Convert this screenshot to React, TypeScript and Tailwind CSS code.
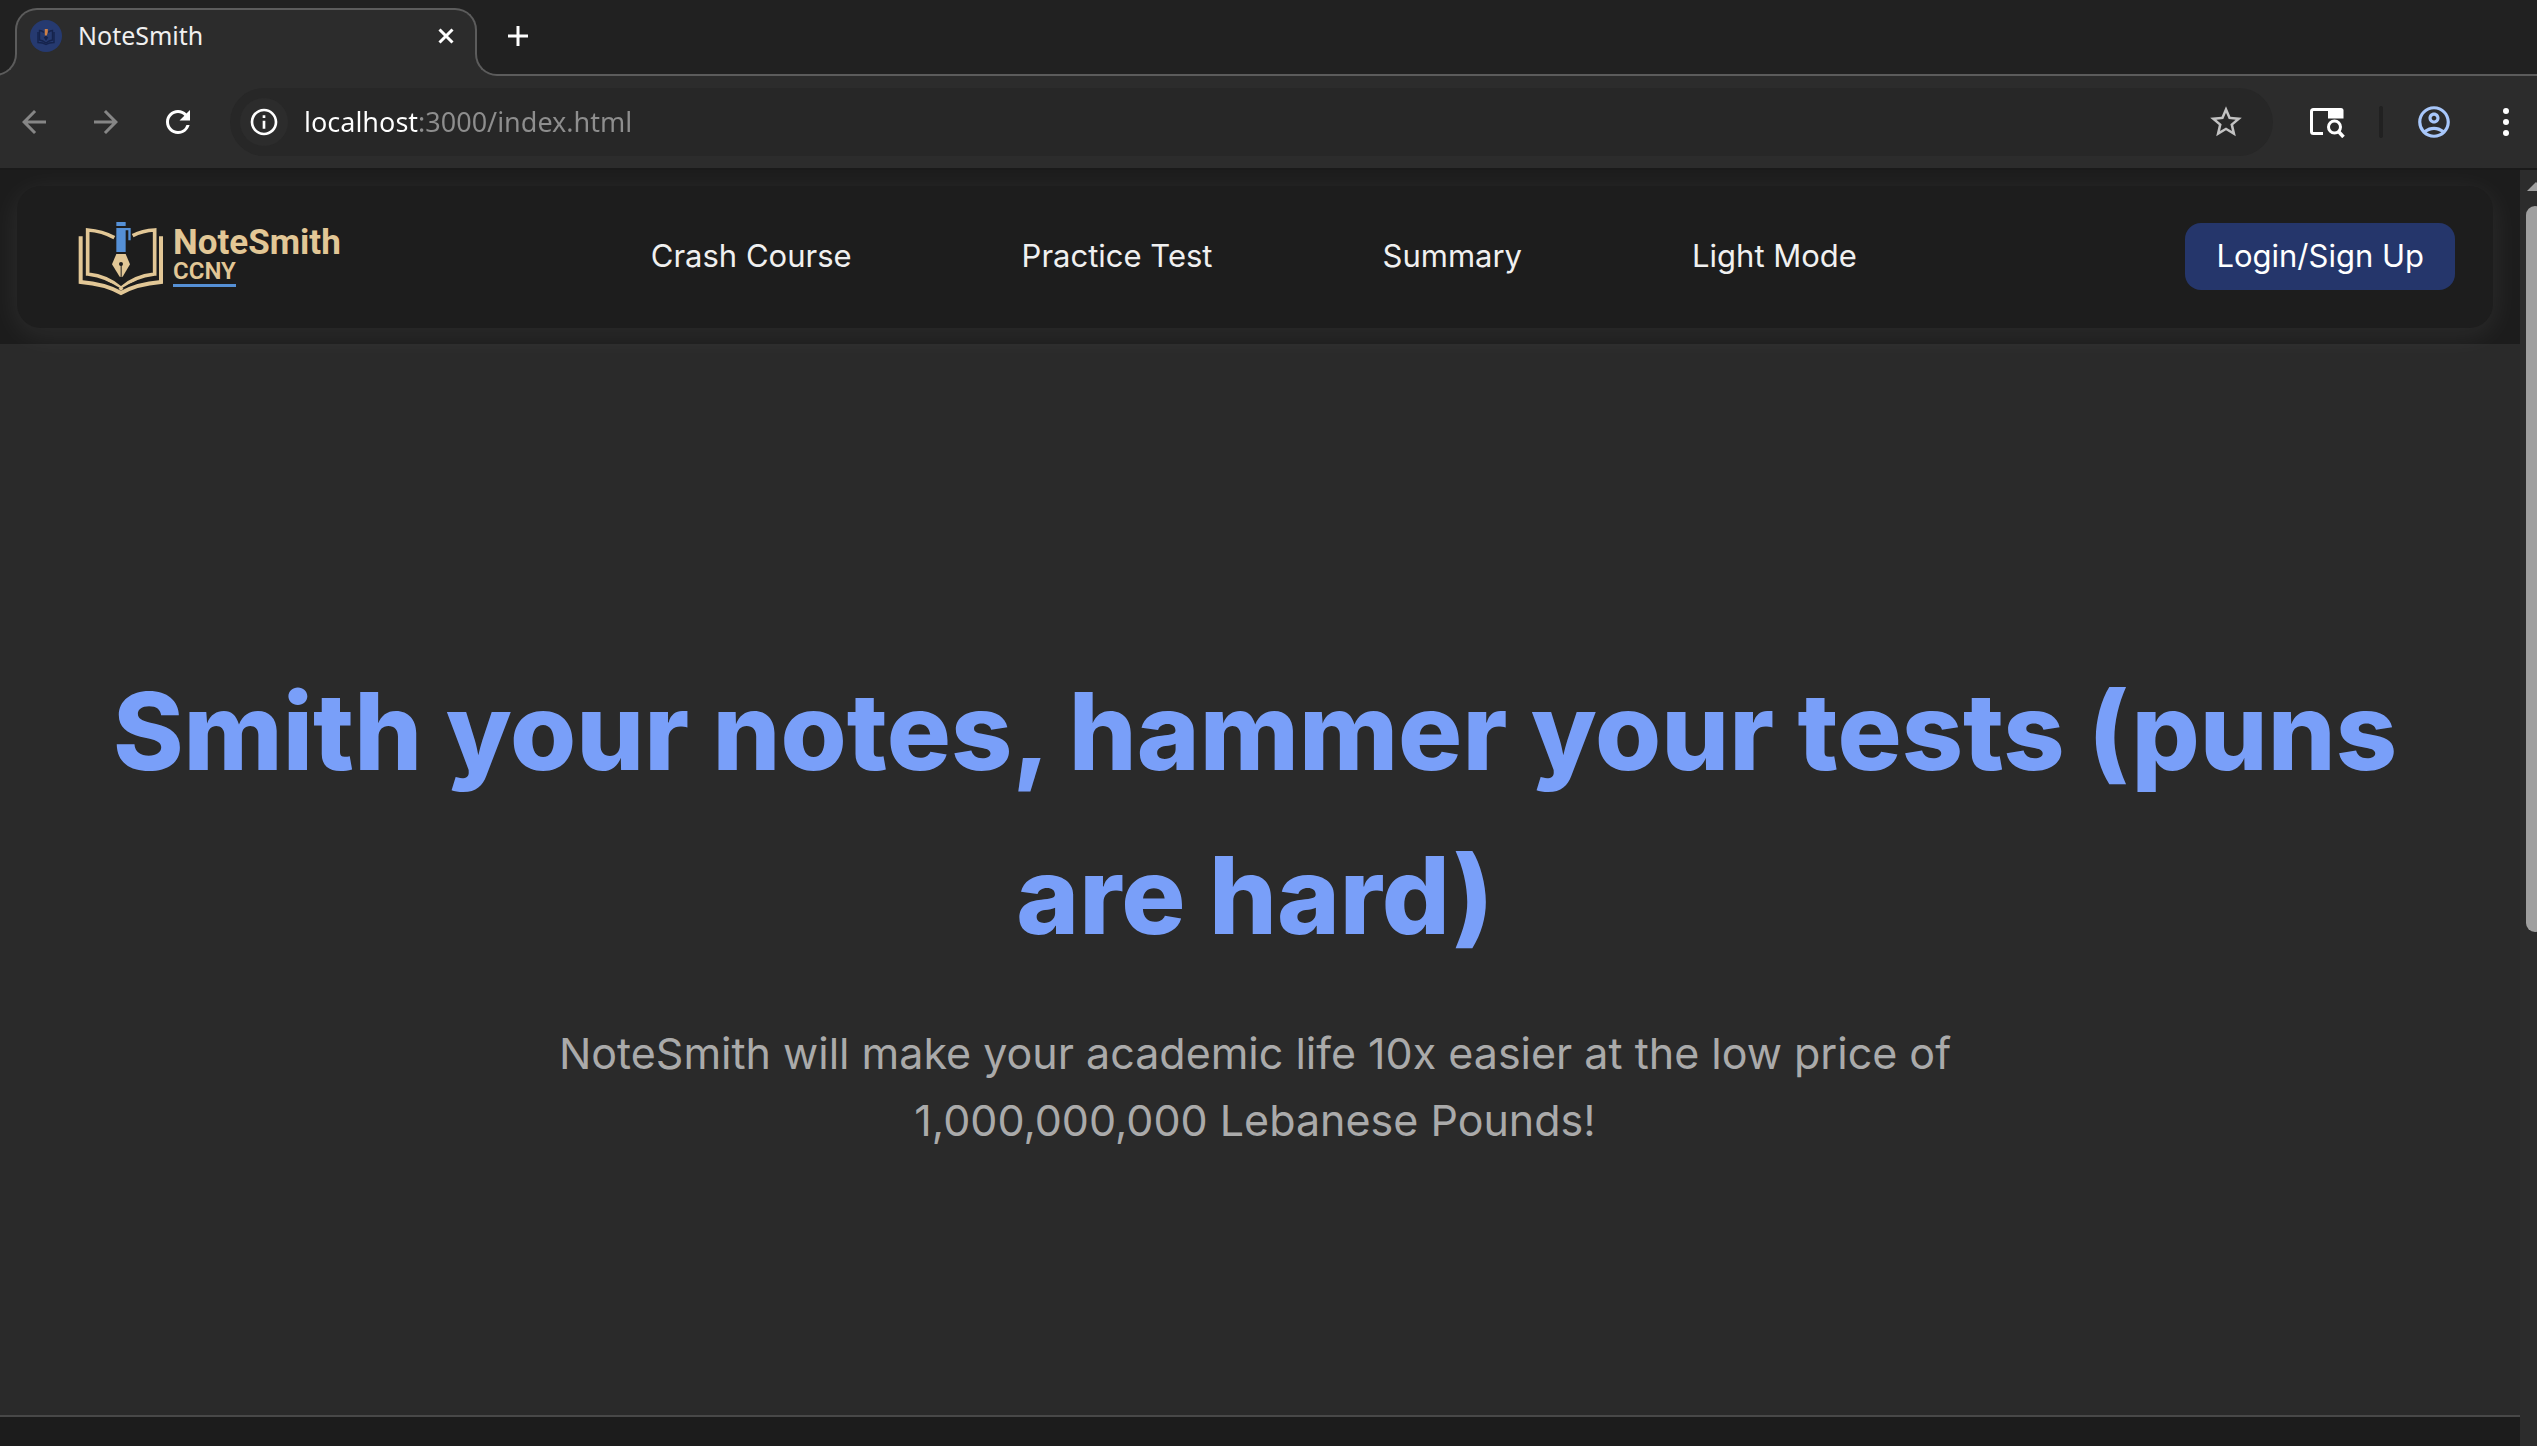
import type { ReactNode } from "react";
import {
  MdArrowBack,
  MdArrowForward,
  MdInfoOutline,
  MdOutlineAccountCircle,
  MdRefresh,
  MdStarBorder,
} from "react-icons/md";

function Favicon() {
  return (
    <svg viewBox="0 0 32 32" className="size-8 shrink-0" aria-hidden="true">
      <circle cx="16" cy="16" r="16" fill="#263a70" />
      <g fill="none" stroke="#15234c" strokeWidth="1.4">
        <path d="M8 12V22.5Q13 22.500 16 24.500Q19 22.500 24 22.500V12" />
        <path d="M14 12.500Q12 10.500 9.500 10.500V20Q13 20.500 16 23Q19 20.500 22.500 20V10.500Q20 10.500 18 12.500" />
      </g>
      <path d="M13.800 17.500L16 15.500L18.200 17.500L16 21Z" fill="#15234c" />
      <path d="M14.800 9H17.800V12L16.800 15.500H14.800Z" fill="#cf8046" />
    </svg>
  );
}

function CloseIcon() {
  return (
    <svg viewBox="0 0 16 16" className="size-4" fill="none" stroke="currentColor" strokeWidth="3" aria-hidden="true">
      <path d="M1.500 1.500L14.500 14.500M14.500 1.500L1.500 14.500" />
    </svg>
  );
}

function PlusIcon() {
  return (
    <svg viewBox="0 0 20 20" className="size-5" fill="none" stroke="currentColor" strokeWidth="3" aria-hidden="true">
      <path d="M10 0V20M0 10H20" />
    </svg>
  );
}

function SidePanelSearchIcon() {
  return (
    <svg viewBox="0 0 36 32" className="h-8 w-9" fill="none" stroke="currentColor" aria-hidden="true">
      <path d="M14 27.500H4.500Q2.500 27.500 2.500 25.500V5.500Q2.500 3.500 4.500 3.500H32" strokeWidth="3" />
      <path d="M19 2H32Q34.500 2 34.500 4.500V12.500H19Z" fill="currentColor" stroke="none" />
      <circle cx="25.500" cy="21" r="6" strokeWidth="3" />
      <path d="M29.500 25.500L34.500 31" strokeWidth="3.500" />
    </svg>
  );
}

function MoreIcon() {
  return (
    <svg viewBox="0 0 6 28" className="h-7 w-1.5" fill="currentColor" aria-hidden="true">
      <circle cx="3" cy="3" r="3" />
      <circle cx="3" cy="14" r="3" />
      <circle cx="3" cy="25" r="3" />
    </svg>
  );
}

function BookPenIcon() {
  return (
    <svg viewBox="52 45 261 231" className="h-[77px] w-[87px] shrink-0" aria-hidden="true">
      <g fill="none" stroke="#e2c796" strokeWidth="12">
        <path d="M60 94V231Q134 237 181 264Q228 237 301 231V94" />
        <path d="M161 98Q125 78 81 75V207Q143 214 181 250Q219 214 282 207V75Q245 77 216 92" strokeWidth="11" />
      </g>
      <path d="M80 219Q140 226 175 250M283 219Q222 226 187 250" fill="none" stroke="#1d1d1d" strokeWidth="5" />
      <path d="M167 51H195V63H167ZM167 69H210V106H203V76H195V141H167Z" fill="#5590d6" />
      <path d="M167 147H195L208 178L186 215H177L154 178Z" fill="#e2c796" />
      <circle cx="181" cy="177" r="6" fill="#1d1d1d" />
      <path d="M181.500 177V215" stroke="#1d1d1d" strokeWidth="3" />
    </svg>
  );
}

function BrowserTab({ title }: { title: string }) {
  return (
    <div className="relative ml-[15px] -mb-0.5 flex w-[462px] items-center rounded-t-[22px] border-x-2 border-t-2 border-[#5c5c5c] bg-[#2c2c2c] pr-[21px] pb-3.5 pl-[13px]">
      <Favicon />
      <span className="ml-4 flex-1 text-[25px] text-[#f0f0f0]">{title}</span>
      <button type="button" aria-label="Close tab" className="text-white">
        <CloseIcon />
      </button>
      <span className="absolute right-full bottom-0 size-6 bg-[#2c2c2c]">
        <span className="block size-full rounded-br-[22px] border-r-2 border-b-2 border-[#5c5c5c] bg-[#212121]" />
      </span>
      <span className="absolute bottom-0 left-full size-6 bg-[#2c2c2c]">
        <span className="block size-full rounded-bl-[22px] border-b-2 border-l-2 border-[#5c5c5c] bg-[#212121]" />
      </span>
    </div>
  );
}

function ToolButton({ label, className, children }: { label: string; className?: string; children: ReactNode }) {
  return (
    <button type="button" aria-label={label} className={"flex shrink-0 items-center justify-center " + (className ?? "")}>
      {children}
    </button>
  );
}

function Toolbar() {
  return (
    <div className="flex h-[94px] shrink-0 items-center border-b-2 border-[#1a1a1a] bg-[#2c2c2c] pr-7 pl-4">
      <div className="flex gap-9">
        <ToolButton label="Back" className="text-[#868686]">
          <MdArrowBack size={36} />
        </ToolButton>
        <ToolButton label="Forward" className="text-[#868686]">
          <MdArrowForward size={36} />
        </ToolButton>
        <ToolButton label="Reload" className="text-white">
          <MdRefresh size={36} />
        </ToolButton>
      </div>
      <div className="ml-[34px] flex h-[68px] flex-1 items-center rounded-full bg-[#272727] pr-7 pl-2.5">
        <ToolButton label="Site information" className="size-12 rounded-full bg-[#2c2c2c] text-white">
          <MdInfoOutline size={32} />
        </ToolButton>
        <input
          type="text"
          aria-label="Address"
          defaultValue="localhost:3000/index.html"
          className="ml-4 flex-1 bg-linear-to-r from-white from-[114px] to-[#8e8e8e] to-[114px] bg-clip-text text-[27px] text-transparent outline-none"
        />
        <ToolButton label="Bookmark this page" className="text-[#c2c2c2]">
          <MdStarBorder size={38} />
        </ToolButton>
      </div>
      <ToolButton label="Search side panel" className="ml-9 text-white">
        <SidePanelSearchIcon />
      </ToolButton>
      <span className="ml-[34px] h-8 w-1 rounded-full bg-[#212121]" />
      <ToolButton label="Profile" className="ml-8 text-[#a8c7fa]">
        <MdOutlineAccountCircle size={38} />
      </ToolButton>
      <ToolButton label="Menu" className="ml-[50px] text-white">
        <MoreIcon />
      </ToolButton>
    </div>
  );
}

const links = ["Crash Course", "Practice Test", "Summary", "Light Mode"];

function SiteHeader() {
  return (
    <header className="bg-[#1c1c1c] py-4 pr-[27px] pl-[17px]">
      <nav className="flex h-[142px] items-center rounded-3xl bg-[#1d1d1d] pr-[38px] pb-0.5 pl-[61px] shadow-[0_6px_30px_rgba(255,255,255,0.08)]">
        <a href="#home" className="flex h-[73px] shrink-0 items-start font-['Roboto',sans-serif] text-[#e2c796]">
          <BookPenIcon />
          <span className="ml-2 flex flex-col items-start pt-[5px]">
            <span className="text-[35px] leading-[35px] font-bold">NoteSmith</span>
            <span className="border-b-[3px] border-[#5590d6] pb-0.5 text-[24px] leading-[22px] font-semibold">CCNY</span>
          </span>
        </a>
        <ul className="ml-[310px] flex gap-[170px] text-[31px] whitespace-nowrap text-[#f0f0f0]">
          {links.map((link) => (
            <li key={link}>
              <a href="#nav">{link}</a>
            </li>
          ))}
        </ul>
        <button type="button" className="ml-auto h-[67px] rounded-2xl bg-[#25366b] px-[31px] text-[31px] whitespace-nowrap text-white">
          Login/Sign Up
        </button>
      </nav>
    </header>
  );
}

function Hero() {
  return (
    <section className="flex flex-1 flex-col items-center justify-center border-b-2 border-[#484848] pt-11 pr-[10px] text-center">
      <h1 className="max-w-[2340px] text-[107px] leading-[164px] font-extrabold text-[#799ff9]">
        Smith your notes, hammer your tests (puns are hard)
      </h1>
      <p className="mt-[43px] max-w-[1440px] text-[43px] leading-[67px] text-[#aaaaaa]">
        NoteSmith will make your academic life 10x easier at the low price of 1,000,000,000 Lebanese Pounds!
      </p>
    </section>
  );
}

function Scrollbar() {
  return (
    <div className="w-[17px] shrink-0 overflow-hidden bg-[#2c2c2c] pt-3 pl-1.5" aria-hidden="true">
      <svg viewBox="0 0 20 10" className="h-[9px] w-5" fill="#9f9f9f">
        <path d="M10 0L20 10H0Z" />
      </svg>
      <div className="mt-[15px] h-[726px] w-[18px] rounded-full bg-[#9f9f9f]" />
    </div>
  );
}

export default function App() {
  return (
    <div className="flex h-screen flex-col overflow-hidden bg-[#2a2a2a] font-['Inter',sans-serif]">
      <div className="font-['Noto_Sans',sans-serif]">
        <div className="flex h-[76px] shrink-0 items-stretch border-b-2 border-[#5c5c5c] bg-[#212121] pt-2">
          <BrowserTab title="NoteSmith" />
          <button type="button" aria-label="New tab" className="mb-2.5 ml-[31px] text-white">
            <PlusIcon />
          </button>
        </div>
        <Toolbar />
      </div>
      <div className="flex min-h-0 flex-1">
        <main className="flex flex-1 flex-col overflow-hidden">
          <SiteHeader />
          <Hero />
          <section className="h-[29px] bg-[#1c1c1c]" />
        </main>
        <Scrollbar />
      </div>
    </div>
  );
}
